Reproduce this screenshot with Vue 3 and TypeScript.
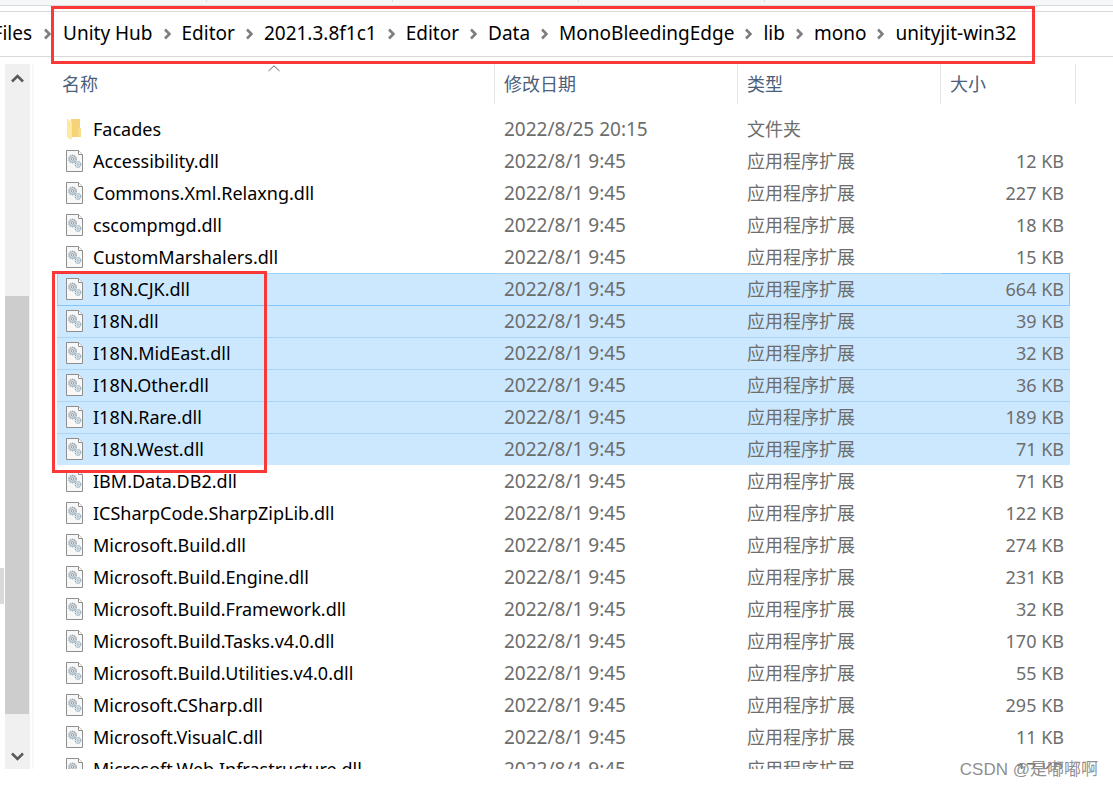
<script setup lang="ts">
interface Entry {
  name: string
  date: string
  size: string
  folder?: boolean
  selected?: boolean
}

const trail: string[] = ['Unity Hub', 'Editor', '2021.3.8f1c1', 'Editor', 'Data', 'MonoBleedingEdge', 'lib', 'mono', 'unityjit-win32']

const dll = (name: string, kb: number, selected = false): Entry => ({
  name, date: '2022/8/1 9:45', size: `${kb} KB`, selected,
})

const entries: Entry[] = [
  { name: 'Facades', date: '2022/8/25 20:15', size: '', folder: true },
  dll('Accessibility.dll', 12),
  dll('Commons.Xml.Relaxng.dll', 227),
  dll('cscompmgd.dll', 18),
  dll('CustomMarshalers.dll', 15),
  dll('I18N.CJK.dll', 664, true),
  dll('I18N.dll', 39, true),
  dll('I18N.MidEast.dll', 32, true),
  dll('I18N.Other.dll', 36, true),
  dll('I18N.Rare.dll', 189, true),
  dll('I18N.West.dll', 71, true),
  dll('IBM.Data.DB2.dll', 71),
  dll('ICSharpCode.SharpZipLib.dll', 122),
  dll('Microsoft.Build.dll', 274),
  dll('Microsoft.Build.Engine.dll', 231),
  dll('Microsoft.Build.Framework.dll', 32),
  dll('Microsoft.Build.Tasks.v4.0.dll', 170),
  dll('Microsoft.Build.Utilities.v4.0.dll', 55),
  dll('Microsoft.CSharp.dll', 295),
  dll('Microsoft.VisualC.dll', 11),
  dll('Microsoft.Web.Infrastructure.dll', 17),
]
</script>

<template>
  <div class="window">
    <div class="ribbon"><i></i><i></i><i></i><i></i></div>
    <nav class="address" aria-label="路径">
      <a class="crumb first" href="#">Files</a>
      <svg class="sep" width="7" height="12" viewBox="0 0 7 12"><path d="M1 1.5 5.5 6 1 10.5" /></svg>
      <div class="trail">
        <template v-for="(part, i) in trail" :key="i">
          <svg v-if="i" class="sep" width="7" height="12" viewBox="0 0 7 12"><path d="M1 1.5 5.5 6 1 10.5" /></svg>
          <a class="crumb" href="#">{{ part }}</a>
        </template>
        <span class="mark trail-mark"></span>
      </div>
    </nav>

    <div class="body">
      <div class="edge"></div>
      <div class="scrollbar">
        <button type="button" aria-label="向上滚动"><svg width="13" height="9" viewBox="0 0 13 9"><path d="M1 7.5 6.5 2 12 7.5" /></svg></button>
        <div class="track"><div class="thumb"></div></div>
        <button type="button" aria-label="向下滚动"><svg width="13" height="9" viewBox="0 0 13 9"><path d="M1 1.5 6.5 7 12 1.5" /></svg></button>
      </div>
      <main class="list">
        <table>
          <colgroup><col /><col class="c-date" /><col class="c-type" /><col class="c-size" /><col class="c-end" /></colgroup>
          <thead>
            <tr>
              <th>
                <button type="button">名称</button>
                <svg class="sort" width="12" height="7" viewBox="0 0 12 7"><path d="M.5 6 6 .8 11.5 6" /></svg>
              </th>
              <th><button type="button">修改日期</button></th>
              <th><button type="button">类型</button></th>
              <th colspan="2"><button type="button">大小</button></th>
            </tr>
          </thead>
          <tbody>
            <tr v-for="(entry, i) in entries" :key="entry.name" :class="{ selected: entry.selected, focused: i === 5 }">
              <td class="name">
                <span v-if="i === 5" class="mark names-mark"></span>
                <div class="file">
                  <svg v-if="entry.folder" class="icon" width="17" height="22" viewBox="0 0 17 22">
                    <path d="M5 1H14V10H15V19H5Z" fill="#f5d376" />
                    <path d="M12 10H15V19H12Z" fill="#f9dd8a" />
                    <path d="M1 1H2L6 4V20L5 22L1 19Z" fill="#ffe9a2" />
                  </svg>
                  <svg v-else class="icon" width="17" height="22" viewBox="0 0 17 22">
                    <path d="M.5.5H12.5L16.5 4.5V21.5H.5Z" fill="#f8f8f8" stroke="#8f8f8f" />
                    <path d="M12.5.5V4.5H16.5" fill="#fff" stroke="#8f8f8f" />
                    <circle cx="6.5" cy="9" r="3.8" fill="#dde3e7" stroke="#98a5ae" stroke-width="1.3" stroke-dasharray="1.5 .9" />
                    <circle cx="6.5" cy="9" r="2.9" fill="none" stroke="#a5b0b8" stroke-width=".7" />
                    <circle cx="6.5" cy="9" r="1.2" fill="#f8f8f8" stroke="#84929c" stroke-width=".9" />
                    <circle cx="12" cy="14.5" r="2.8" fill="#dfeef6" stroke="#93a9b7" stroke-width="1.2" stroke-dasharray="1.4 .8" />
                    <circle cx="12" cy="14.5" r="1" fill="#f8f8f8" stroke="#8fa9b8" stroke-width=".8" />
                  </svg>
                  <span>{{ entry.name }}</span>
                </div>
              </td>
              <td class="date">{{ entry.date }}</td>
              <td>{{ entry.folder ? '文件夹' : '应用程序扩展' }}</td>
              <td class="size">{{ entry.size }}</td>
              <td class="end"></td>
            </tr>
          </tbody>
        </table>
      </main>
    </div>
    <div class="watermark">CSDN @是嘟嘟啊</div>
  </div>
</template>

<style>
body { margin: 0; background: #fff; }
</style>

<style scoped>
* { box-sizing: border-box; }
.window {
  position: relative;
  display: flex;
  flex-direction: column;
  height: 100vh;
  padding-bottom: 18px;
  overflow: hidden;
  background: #fff;
  color: #000;
  font: 18px/32px "Noto Sans", "Noto Sans CJK SC", sans-serif;
}
.ribbon {
  display: flex;
  flex: none;
  height: 6px;
  padding-left: 206px;
  background: #f5f6f7;
  border-bottom: 1px solid #dadbdc;
}
.ribbon i { width: 1px; height: 2px; margin-right: 185px; background: #dcdddf; }
.address {
  display: flex;
  flex: none;
  align-items: center;
  height: 46px;
  margin-top: 5px;
  border-top: 1px solid #d9d9d9;
  border-bottom: 1px solid #d9d9d9;
  font-size: 19px;
  white-space: nowrap;
}
.crumb { height: 34px; color: #000; text-decoration: none; }
.first { display: flex; justify-content: flex-end; width: 32px; margin-right: 12px; }
.sep { flex: none; fill: none; stroke: #7d7d7d; stroke-width: 2.6; }
.trail { position: relative; display: flex; align-items: center; gap: 11px; margin-left: 12px; }
.mark { position: absolute; z-index: 2; border: 3px solid #fb3838; pointer-events: none; }
.trail-mark { inset: -11px -19px -13px -12px; }
.body { display: flex; flex: 1; min-height: 0; margin-top: 7px; }
.edge { flex: none; width: 4px; height: 36px; margin: 504px 1px 0 0; background: #d9d9d9; }
.scrollbar { display: flex; flex: none; flex-direction: column; width: 25px; margin-right: 2px; background: #f0f0f0; }
.scrollbar button { height: 29px; padding: 0; border: 0; background: none; line-height: 0; }
.scrollbar button:last-child { height: 25px; }
.scrollbar path { fill: none; stroke: #5a5a5a; stroke-width: 2.6; }
.track { flex: 1; padding-top: 203px; }
.thumb { width: 24px; height: 418px; background: #cdcdcd; }
.list { flex: 1; min-width: 0; overflow: hidden; padding: 0 37px 0 23px; border-left: 2px solid #f7f7f7; }
table { width: 100%; table-layout: fixed; border-collapse: separate; border-spacing: 0; }
.c-date { width: 243px; }
.c-type { width: 203px; }
.c-size { width: 129px; }
.c-end { width: 6px; }
th { position: relative; height: 40px; padding: 0 0 0 9px; border-right: 1px solid #e5e5e5; text-align: left; }
th:first-child { padding-left: 5px; }
th button { padding: 0; border: 0; background: none; color: #4c607a; font: inherit; font-weight: 400; }
.sort { position: absolute; top: 1px; left: 50%; margin-left: -8px; fill: none; stroke: #666; }
tbody::before { display: block; height: 9px; content: ""; }
td { height: 32px; padding: 0 0 0 9px; color: #6d6d6d; white-space: nowrap; }
td.name { position: relative; color: #000; }
td.date { font-size: 19px; }
.file { display: flex; align-items: center; gap: 10px; height: 32px; }
.icon { flex: none; }
td.size { padding: 0 6px 0 0; text-align: right; }
td.end { padding: 0; }
.selected td:not(.end) { background: #cce8ff; box-shadow: inset 0 1px #a9d5f8; }
.focused + .selected td:not(.end) { box-shadow: inset 0 1px #84c5fc; }
.selected.focused td.name { box-shadow: inset 1px 1px #99d1ff; }
.selected.focused td.size { box-shadow: inset -1px 1px #84c5fc; }
.names-mark { top: -2px; left: -5px; width: 215px; height: 202px; }
.watermark {
  position: absolute;
  right: 15px;
  bottom: 1px;
  color: #8f8f8f;
  font: 17px/32px "Liberation Sans", "Noto Sans CJK SC", sans-serif;
}
</style>
